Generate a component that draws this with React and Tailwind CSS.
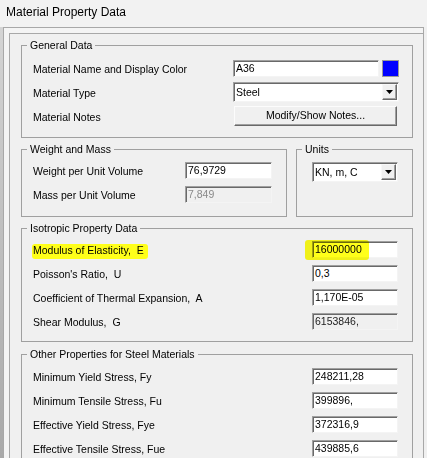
import React from "react";

function TextBox({ value, width = "w-[86px]", mode = "normal", highlight = false }) {
  const tone =
    mode === "disabled"
      ? "bg-[#f0f0f0] text-[#8a8a8a]"
      : mode === "readonly"
      ? "bg-[#f0f0f0] text-[#222]"
      : "bg-white text-black";
  return (
    <div
      className={`relative h-[17px] ${width} ${tone} border border-t-[#a0a0a0] border-l-[#a0a0a0] border-r-[#f4f4f4] border-b-[#f4f4f4] shadow-[inset_1px_1px_0_#696969] pl-[2px] text-[10.5px] leading-[15px] whitespace-nowrap`}
    >
      {value}
      {highlight && (
        <span className="absolute left-[-8px] top-[-2px] w-[64px] h-[20px] rounded-[3px] bg-[#ffff1a] mix-blend-multiply" />
      )}
    </div>
  );
}

function DropArrow() {
  return (
    <div className="w-[15px] h-[16px] mr-[1px] flex items-center justify-center bg-[#f0f0f0] border border-t-[#f8f8f8] border-l-[#f8f8f8] border-r-[#696969] border-b-[#696969] shadow-[inset_-1px_-1px_0_#a0a0a0]">
      <svg width="7" height="4" viewBox="0 0 7 4">
        <path d="M0 0h7L3.5 4z" fill="#000" />
      </svg>
    </div>
  );
}

function ComboBox({ value, width }) {
  return (
    <div
      className={`h-[20px] ${width} flex items-center bg-white border border-t-[#a0a0a0] border-l-[#a0a0a0] border-r-[#f4f4f4] border-b-[#f4f4f4] shadow-[inset_1px_1px_0_#696969]`}
    >
      <span className="flex-1 pl-[2px] text-[10.5px] leading-[15px]">{value}</span>
      <DropArrow />
    </div>
  );
}

function Group({ title, className = "", children }) {
  return (
    <fieldset className={`border border-[#a0a0a0] ${className}`}>
      <legend className="ml-[5px] px-[3px] text-[10.5px] leading-[13px]">{title}</legend>
      {children}
    </fieldset>
  );
}

function Row({ label, children, marked = false }) {
  return (
    <div className="h-[24px] flex items-center justify-between">
      {marked ? (
        <span className="-ml-[1px] mt-[4px] pl-[1px] pr-[4px] h-[15px] flex items-center rounded-[3px] bg-[#ffff1a] whitespace-pre">
          {label}
        </span>
      ) : (
        <span className="whitespace-pre pt-[4px]">{label}</span>
      )}
      {children}
    </div>
  );
}

const isotropic = [
  { label: "Modulus of Elasticity,  E", value: "16000000", marked: true },
  { label: "Poisson's Ratio,  U", value: "0,3" },
  { label: "Coefficient of Thermal Expansion,  A", value: "1,170E-05" },
  { label: "Shear Modulus,  G", value: "6153846,", mode: "readonly" }
];

const steel = [
  ["Minimum Yield Stress, Fy", "248211,28"],
  ["Minimum Tensile Stress, Fu", "399896,"],
  ["Effective Yield Stress, Fye", "372316,9"],
  ["Effective Tensile Stress, Fue", "439885,6"]
];

export default function App() {
  return (
    <div className="relative w-[427px] h-[458px] overflow-hidden bg-[#f0f0f0] text-black font-['Liberation_Sans',Arial,sans-serif] text-[10.5px]">
      <div className="absolute left-0 top-[27px] w-[3px] h-[431px] bg-gradient-to-b from-[#d4d4d4] to-[#a9a9a9]" />
      <div className="h-[27px] pl-[6px] pt-[5px] text-[12px] leading-[15px] bg-[#f2f2f2]">Material Property Data</div>

      <div className="ml-[3px] w-[421px] h-[431px] border-l border-t border-r border-[#a8a8a8] pl-[5px] pt-[5px] bg-[#f4f4f4]">
        <div className="h-full border-l border-t border-[#a8a8a8] bg-[#f0f0f0] pl-[11px] pt-[5px]">
          <Group title="General Data" className="w-[392px] h-[99px]">
            <div className="pl-[11px] pr-[13px] pt-[4px]">
              <Row label="Material Name and Display Color">
                <div className="flex items-center gap-[3px]">
                  <TextBox value="A36" width="w-[146px]" />
                  <div className="w-[17px] h-[17px] bg-[#0000ff] border border-[#9a9a9a]" />
                </div>
              </Row>
              <Row label="Material Type">
                <ComboBox value="Steel" width="w-[166px]" />
              </Row>
              <Row label="Material Notes">
                <div className="w-[163px] h-[20px] mr-[2px] flex items-center justify-center bg-[#f0f0f0] border border-t-[#fcfcfc] border-l-[#fcfcfc] border-r-[#696969] border-b-[#696969] shadow-[inset_-1px_-1px_0_#a0a0a0]">
                  Modify/Show Notes...
                </div>
              </Row>
            </div>
          </Group>

          <div className="flex gap-[9px] mt-[5px]">
            <Group title="Weight and Mass" className="w-[266px] h-[74px]">
              <div className="pl-[11px] pr-[14px] pt-[2px]">
                <Row label="Weight per Unit Volume">
                  <TextBox value="76,9729" width="w-[87px]" />
                </Row>
                <Row label="Mass per Unit Volume">
                  <TextBox value="7,849" width="w-[87px]" mode="disabled" />
                </Row>
              </div>
            </Group>
            <Group title="Units" className="w-[117px] h-[74px]">
              <div className="pl-[15px] pt-[6px]">
                <ComboBox value="KN, m, C" width="w-[86px]" />
              </div>
            </Group>
          </div>

          <Group title="Isotropic Property Data" className="w-[392px] h-[120px] mt-[5px]">
            <div className="pl-[11px] pr-[14px] pt-[2px]">
              {isotropic.map((r) => (
                <Row key={r.label} label={r.label} marked={r.marked}>
                  <TextBox value={r.value} mode={r.mode} highlight={r.marked} />
                </Row>
              ))}
            </div>
          </Group>

          <Group title="Other Properties for Steel Materials" className="w-[392px] h-[120px] mt-[6px]">
            <div className="pl-[11px] pr-[14px] pt-[3px]">
              {steel.map(([label, value]) => (
                <Row key={label} label={label}>
                  <TextBox value={value} />
                </Row>
              ))}
            </div>
          </Group>
        </div>
      </div>
    </div>
  );
}
